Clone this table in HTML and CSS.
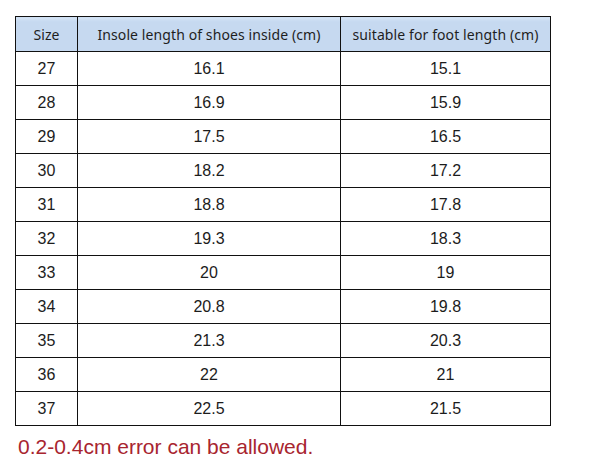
FILE: index.html
```html
<!DOCTYPE html>
<html>
<head>
<meta charset="utf-8">
<link rel="stylesheet" href="styles.css">
</head>
<body>
<div class="page">
<table class="size-table">
<thead>
<tr><th class="c1">Size</th><th class="c2">Insole length of shoes inside (cm)</th><th class="c3">suitable for foot length (cm)</th></tr>
</thead>
<tbody>
<tr><td>27</td><td>16.1</td><td>15.1</td></tr>
<tr><td>28</td><td>16.9</td><td>15.9</td></tr>
<tr><td>29</td><td>17.5</td><td>16.5</td></tr>
<tr><td>30</td><td>18.2</td><td>17.2</td></tr>
<tr><td>31</td><td>18.8</td><td>17.8</td></tr>
<tr><td>32</td><td>19.3</td><td>18.3</td></tr>
<tr><td>33</td><td>20</td><td>19</td></tr>
<tr><td>34</td><td>20.8</td><td>19.8</td></tr>
<tr><td>35</td><td>21.3</td><td>20.3</td></tr>
<tr><td>36</td><td>22</td><td>21</td></tr>
<tr><td>37</td><td>22.5</td><td>21.5</td></tr>
</tbody>
</table>
<p class="note">0.2-0.4cm error can be allowed.</p>
</div>
</body>
</html>
```
FILE: styles.css
```css
html, body { margin: 0; padding: 0; background: #fff; }
.page { padding: 16px 0 0 15px; }
.size-table {
  border-collapse: collapse;
  table-layout: fixed;
  width: 532px;
}
.size-table th, .size-table td {
  border: 1px solid #111;
  padding: 0;
  text-align: center;
  vertical-align: middle;
}
.size-table th {
  height: 34px;
  font-family: "Noto Sans", "DejaVu Sans", sans-serif;
  font-weight: normal;
  font-size: 14px;
  letter-spacing: 0.1px;
  color: #1e1e1e;
  background: linear-gradient(#d8e6f6 0, #c6d9f0 4px, #c6d9f0 100%);
}
.size-table td {
  height: 33px;
  font-family: "Liberation Sans", Arial, sans-serif;
  font-size: 16px;
  color: #1c1c1c;
}
.c1 { width: 61px; }
.c2 { width: 262px; }
.c3 { width: 209px; }
.note {
  margin: 9px 0 0 3px;
  font-family: "Liberation Sans", Arial, sans-serif;
  font-size: 21px;
  color: #a8252f;
}
```
